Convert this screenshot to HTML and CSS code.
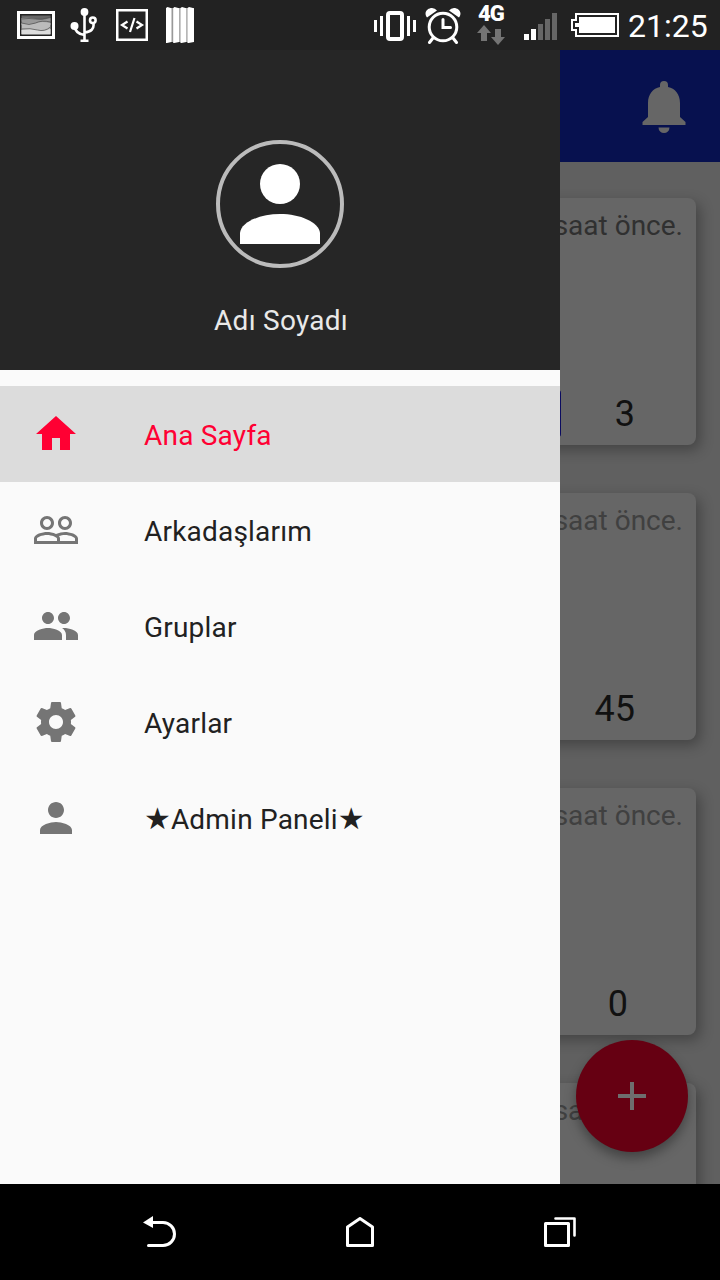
FILE: index.html
```html
<!DOCTYPE html>
<html lang="tr">
<head>
<meta charset="utf-8">
<title>Ana Sayfa</title>
<link rel="stylesheet" href="styles.css">
</head>
<body>
<div class="screen">
  <header class="status">
    <div class="status-left">
      <svg width="38" height="28" viewBox="0 0 38 28"><path fill="#fff" fill-rule="evenodd" d="M0 0h38v28H0zM3 3v22h32V3z"/><path fill="#666" d="M4.500 4.500h29v6h-29z"/><path fill="#999" d="M4.500 7q8-1 14 1t15-1v7h-29z"/><path fill="#bbb" d="M4.500 12q10 2 15 0t14 0v11h-29z"/><path fill="#ddd" d="M4.500 19q9-2 16 0t13-1v5.500h-29z"/><path fill="none" stroke="#555" stroke-width=".8" d="M4.500 8q8-1 14 0t15-2M4.500 12q8 3 14 0t15-1M4.500 18q9-1 16 1t13-3"/></svg>
      <svg class="usb" width="28" height="34" viewBox="0 0 28 34"><g fill="none" stroke="#fff" stroke-width="2.600"><path d="M14.500 4v29M10.500 32.800h8M4.500 18q1 8 10 9M14.500 24.500q10-1 9-9"/><circle cx="22.800" cy="12.300" r="2.800"/></g><circle cx="14.500" cy="4" r="3.900" fill="#fff"/><circle cx="4.500" cy="18" r="4" fill="#fff"/></svg>
      <svg class="code" width="32" height="32" viewBox="0 0 32 32"><rect x="1.250" y="1.250" width="29.500" height="29.500" fill="none" stroke="#fff" stroke-width="2.500"/><path fill="none" stroke="#fff" stroke-width="2.200" d="M11.500 12.500 6 16l5.500 3.500M20.500 12.500 26 16l-5.500 3.500M18.500 9l-4.500 14"/></svg>
      <svg class="bars" width="28" height="36" viewBox="0 0 28 36"><path fill="#999" d="M0 1h28v34H0z"/><path fill="#fff" d="M0 1 1.500 0 5.500 1.200V35L1 36H0zM7.200 1 8.500 0l4.700 1.200V35l-5 1h-1zM14.500 1 16 0l4.300 1.200V35l-4.800 1h-1zM21.500 1 23 0l5 1.200V35l-5.500 1h-1z"/></svg>
    </div>
    <div class="status-right">
      <svg width="42" height="30" viewBox="0 0 42 30"><rect x="14" y="2" width="14" height="26" rx="2" fill="none" stroke="#fff" stroke-width="4"/><path fill="#fff" d="M0 9h3v12H0zM6 5h3v20H6zM33 5h3v20h-3zM39 9h3v12h-3z"/></svg>
      <svg class="alarm" width="36" height="36" viewBox="0 0 36 36"><g fill="none" stroke="#fff" stroke-linecap="round"><circle cx="18" cy="19" r="13.800" stroke-width="3"/><path stroke-width="3" d="M18 11.500v8h7.500M8 30l-3.500 4.500M28 30l3.500 4.500"/></g><path fill="#fff" d="M2 9.500C-2 4 3 0 7 0q3 0 5 2.500zM34 9.500C38 4 33 0 29 0q-3 0-5 2.500z"/></svg>
      <div class="network"><span class="network-label">4G</span><svg width="28" height="20" viewBox="0 0 28 20"><path fill="#747474" d="M7 0l7 8h-4v8H4V8H0zM18 4h6v8h4l-7 8-7-8h4z"/></svg></div>
      <svg class="signal" width="33" height="27" viewBox="0 0 33 27"><path fill="#fff" d="M0 21h5v6H0zM7 16h5v11H7z"/><path fill="#666" d="M14 11h5v16h-5zM21 6h5v21h-5zM28 0h5v27h-5z"/></svg>
      <svg class="battery" width="48" height="24" viewBox="0 0 48 24"><path fill="none" stroke="#fff" stroke-width="2" d="M5 1h42v22H5v-6H1V7h4z"/><path fill="#fff" d="M8 4h36v16H8v-6H4v-4h4z"/></svg>
      <span class="clock">21:25</span>
    </div>
  </header>

  <div class="body">
    <aside class="drawer">
      <div class="profile">
        <svg width="128" height="128" viewBox="0 0 128 128"><circle cx="64" cy="64" r="62" fill="none" stroke="#bbb" stroke-width="4"/><circle cx="64" cy="44" r="20" fill="#fff"/><path fill="#fff" d="M24 104V93C25 82 44 74 64 74s39 8 40 19v11z"/></svg>
        <div class="name">Adı Soyadı</div>
      </div>
      <nav class="menu">
        <a class="item active"><svg class="icon" viewBox="0 0 24 24"><path d="M10 20v-6h4v6h5v-8h3L12 3 2 12h3v8z"/></svg><span>Ana Sayfa</span></a>
        <a class="item"><svg class="icon" viewBox="0 0 24 24"><path d="M16.500 13c-1.200 0-3.070.34-4.500 1-1.430-.67-3.300-1-4.500-1C5.330 13 1 14.080 1 16.250V19h22v-2.750c0-2.170-4.330-3.250-6.500-3.250zm-4 4.500h-10v-1.250c0-.54 2.560-1.750 5-1.750s5 1.210 5 1.750v1.250zm9 0H14v-1.250c0-.46-.2-.86-.52-1.220.88-.3 1.960-.53 3.020-.53 2.440 0 5 1.210 5 1.750v1.250zM7.500 12c1.930 0 3.500-1.570 3.500-3.500S9.430 5 7.500 5 4 6.570 4 8.500 5.570 12 7.500 12zm0-5.500c1.100 0 2 .9 2 2s-.9 2-2 2-2-.9-2-2 .9-2 2-2zm9 5.500c1.930 0 3.500-1.570 3.500-3.500S18.430 5 16.500 5 13 6.570 13 8.500s1.570 3.500 3.500 3.500zm0-5.500c1.100 0 2 .9 2 2s-.9 2-2 2-2-.9-2-2 .9-2 2-2z"/></svg><span>Arkadaşlarım</span></a>
        <a class="item"><svg class="icon" viewBox="0 0 24 24"><path d="M16 11c1.660 0 2.990-1.340 2.990-3S17.660 5 16 5s-3 1.340-3 3 1.340 3 3 3zm-8 0c1.660 0 2.990-1.340 2.990-3S9.660 5 8 5 5 6.340 5 8s1.340 3 3 3zm0 2c-2.330 0-7 1.170-7 3.500V19h14v-2.500c0-2.330-4.670-3.500-7-3.500zm8 0c-.29 0-.62.02-.97.05 1.160.84 1.970 1.970 1.970 3.450V19h6v-2.500c0-2.330-4.670-3.500-7-3.500z"/></svg><span>Gruplar</span></a>
        <a class="item"><svg class="icon" viewBox="0 0 24 24"><path d="M19.430 12.980c.04-.32.07-.64.07-.98s-.03-.66-.07-.98l2.110-1.650c.19-.15.24-.42.12-.64l-2-3.460c-.12-.22-.39-.3-.61-.22l-2.490 1c-.52-.4-1.080-.73-1.690-.98l-.38-2.650C14.460 2.180 14.250 2 14 2h-4c-.25 0-.46.18-.49.42l-.38 2.650c-.61.25-1.170.59-1.690.98l-2.490-1c-.23-.09-.49 0-.61.22l-2 3.460c-.13.22-.07.49.12.64l2.110 1.650c-.04.32-.07.65-.07.98s.03.66.07.98l-2.110 1.650c-.19.15-.24.42-.12.64l2 3.460c.12.22.39.3.61.22l2.490-1c.52.4 1.080.73 1.690.98l.38 2.650c.03.24.24.42.49.42h4c.25 0 .46-.18.49-.42l.38-2.650c.61-.25 1.170-.59 1.690-.98l2.490 1c.23.09.49 0 .61-.22l2-3.460c.12-.22.07-.49-.12-.64l-2.110-1.650zM12 15.500c-1.930 0-3.500-1.570-3.500-3.500s1.570-3.500 3.500-3.500 3.500 1.570 3.500 3.500-1.570 3.500-3.500 3.500z"/></svg><span>Ayarlar</span></a>
        <a class="item"><svg class="icon" viewBox="0 0 24 24"><path d="M12 12c2.210 0 4-1.790 4-4s-1.790-4-4-4-4 1.790-4 4 1.790 4 4 4zm0 2c-2.670 0-8 1.340-8 4v2h16v-2c0-2.660-5.330-4-8-4z"/></svg><span class="admin"><span class="star">★</span>Admin Paneli<span class="star">★</span></span></a>
      </nav>
    </aside>

    <main class="content">
      <div class="appbar">
        <svg width="44" height="52" viewBox="0 0 44 52"><path fill="#666" d="M.5 44v-3L6 36V22C6 13 11 7.500 18 6V4a4 4 0 0 1 8 0v2c7 1.500 12 7 12 16v14l5.500 5v3zM16.500 46.500h11a5.500 5.500 0 0 1-11 0z"/></svg>
      </div>
      <div class="cards">
        <article class="card first"><div class="time">saat önce.</div><div class="tag"></div><div class="count">3</div></article>
        <article class="card"><div class="time">saat önce.</div><div class="count">45</div></article>
        <article class="card"><div class="time">saat önce.</div><div class="count zero">0</div></article>
        <article class="card"><div class="time">saat önce.</div></article>
      </div>
      <div class="fab"><svg width="28" height="28" viewBox="0 0 28 28"><path fill="#6e6e6e" d="M12 0h4v12h12v4H16v12h-4V16H0v-4h12z"/></svg></div>
    </main>
  </div>

  <footer class="navbar">
    <svg width="34" height="32" viewBox="0 0 34 32"><path fill="none" stroke="#fff" stroke-width="3" stroke-linecap="round" d="M9 6.500h11a11.300 11.300 0 0 1 0 23H5.500"/><path fill="#fff" d="M0 6.500 10 0v12z"/></svg>
    <svg class="home" width="28" height="30" viewBox="0 0 28 30"><path fill="none" stroke="#fff" stroke-width="3" stroke-linejoin="round" d="M1.500 28.500V10L14 1.500 26.500 10v18.500z"/></svg>
    <svg width="32" height="30" viewBox="0 0 32 30"><g fill="none" stroke="#fff" stroke-width="3" stroke-linejoin="round"><path d="M1.500 6.500h23v22h-23z"/><path stroke-width="2.600" stroke-linecap="round" d="M11.500 1.500h19v17"/></g></svg>
  </footer>
</div>
</body>
</html>
```

FILE: styles.css
```css
* { box-sizing: border-box; }
body { margin: 0; font-family: Roboto, "Noto Sans", sans-serif; }
svg { display: block; flex: none; }

.screen { display: flex; flex-direction: column; width: 720px; height: 1280px; overflow: hidden; background: #000; }

.status { display: flex; justify-content: space-between; height: 50px; background: #222; color: #fff; }
.status-left { display: flex; align-items: center; padding-left: 17px; }
.usb { margin-left: 15px; margin-top: -1px; }
.code { margin-left: 18px; }
.bars { margin-left: 18px; }
.status-right { display: flex; align-items: center; padding-right: 12px; margin-top: 2px; }
.alarm { margin-left: 9px; }
.network { display: flex; flex-direction: column; gap: 4px; width: 28px; margin-left: 16px; margin-top: -3px; }
.network-label { height: 16px; font-size: 22px; line-height: 18px; font-weight: 900; letter-spacing: -.8px; text-align: center; }
.signal { margin-left: 19px; }
.battery { margin-left: 14px; margin-top: -3px; }
.clock { width: 80px; margin-left: 9px; font-size: 32px; line-height: 50px; white-space: nowrap; }

.body { display: flex; height: 1134px; }
.drawer { width: 560px; background: #fafafa; }
.profile { display: flex; flex-direction: column; align-items: center; height: 320px; padding-top: 90px; background: #262626; }
.name { margin-top: 36px; padding-left: 2px; font-size: 28px; line-height: 34px; letter-spacing: .25px; color: #e9e9e9; }
.menu { padding-top: 16px; }
.item { display: flex; align-items: center; gap: 64px; height: 96px; padding: 0 32px; font-size: 28px; line-height: 34px; letter-spacing: .2px; white-space: nowrap; color: #212121; }
.item > span { padding-top: 4px; }
.item > .admin { padding-top: 2px; }
.icon { width: 48px; height: 48px; fill: #757575; }
.active { background: #dcdcdc; color: #ff0033; }
.active .icon { fill: #ff0033; }
.star { font-family: "DejaVu Sans", sans-serif; font-size: 30px; line-height: 34px; letter-spacing: 0; }

.content { position: relative; width: 160px; overflow: hidden; background: #606060; }
.appbar { display: flex; justify-content: flex-end; height: 112px; padding: 31px 34px 0 0; background: #07114f; }
.cards { display: flex; flex-direction: column; gap: 48px; padding: 36px 24px 0 0; }
.card { display: flex; flex-direction: column; justify-content: space-between; position: relative; flex: none; height: 247px; margin-left: -24px; padding: 11px 13px 10px 0; border-radius: 8px; background: #666; box-shadow: 4px 5px 14px rgba(0, 0, 0, .3); text-align: right; }
.time { font-size: 28px; line-height: 34px; white-space: nowrap; color: #404040; }
.first .time { color: #303030; }
.count { padding-right: 48px; font-size: 36px; line-height: 42px; color: #111; }
.zero { padding-right: 55px; }
.tag { position: absolute; left: 0; bottom: 8px; width: 25px; height: 47px; border-radius: 3px; background: #0b0b60; }
.fab { position: absolute; right: 32px; bottom: 32px; display: grid; place-items: center; width: 112px; height: 112px; border-radius: 50%; background: #660012; box-shadow: 0 6px 12px rgba(0, 0, 0, .35); }

.navbar { display: flex; justify-content: space-between; align-items: center; height: 96px; padding: 0 144px 0 143px; background: #000; }
.home { margin-right: 2px; }
```
